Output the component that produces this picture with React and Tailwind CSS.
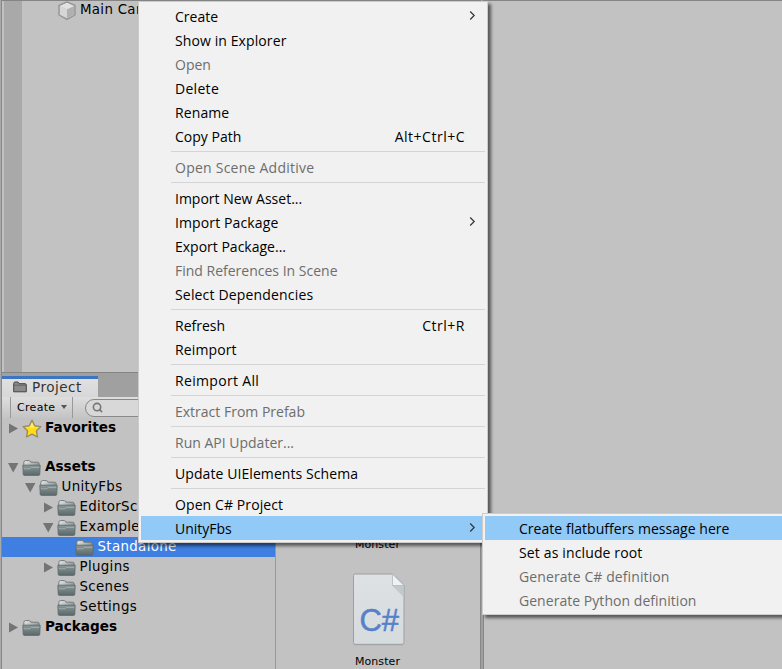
import React from 'react';
import { Search } from 'lucide-react';
import clsx from 'clsx';

const assetMenu = [
  { label: 'Create', submenu: true },
  { label: 'Show in Explorer', tracking: 'tracking-[0.1px]' },
  { label: 'Open', disabled: true },
  { label: 'Delete', tracking: 'tracking-[0.3px]' },
  { label: 'Rename', tracking: 'tracking-[0.1px]' },
  { label: 'Copy Path', shortcut: 'Alt+Ctrl+C' },
  { separator: true },
  { label: 'Open Scene Additive', disabled: true, tracking: 'tracking-[0.24px]' },
  { separator: true },
  { label: 'Import New Asset...' },
  { label: 'Import Package', submenu: true, tracking: 'tracking-[0.12px]' },
  { label: 'Export Package...' },
  { label: 'Find References In Scene', disabled: true },
  { label: 'Select Dependencies', tracking: 'tracking-[0.17px]' },
  { separator: true },
  { label: 'Refresh', shortcut: 'Ctrl+R' },
  { label: 'Reimport', tracking: 'tracking-[0.12px]' },
  { separator: true },
  { label: 'Reimport All', tracking: 'tracking-[0.32px]' },
  { separator: true },
  { label: 'Extract From Prefab', disabled: true },
  { separator: true },
  { label: 'Run API Updater...', disabled: true },
  { separator: true },
  { label: 'Update UIElements Schema', tracking: 'tracking-[0.08px]' },
  { separator: true },
  { label: 'Open C# Project', tracking: 'tracking-[0.1px]' },
  { label: 'UnityFbs', submenu: true, active: true },
];

const fbsMenu = [
  { label: 'Create flatbuffers message here', active: true, tracking: 'tracking-[0.04px]' },
  { label: 'Set as include root', tracking: 'tracking-[0.14px]' },
  { label: 'Generate C# definition', disabled: true, tracking: 'tracking-[0.1px]' },
  { label: 'Generate Python definition', disabled: true, tracking: 'tracking-[0.04px]' },
];

const FolderIcon = () => (
  <svg className="h-[18px] w-[19px] shrink-0" viewBox="0 0 19 18">
    <defs>
      <linearGradient id="folderFront" x1="0" y1="0" x2="0" y2="1">
        <stop offset="0" stopColor="#8b9899" />
        <stop offset="1" stopColor="#5b6869" />
      </linearGradient>
      <linearGradient id="folderBack" x1="0" y1="0" x2="1" y2="0.6">
        <stop offset="0" stopColor="#f2f2f2" />
        <stop offset="1" stopColor="#8d9797" />
      </linearGradient>
    </defs>
    <path d="M1.8 7V3.5Q1.8 1.6 3.8 1.6H7.3Q8.6 1.6 8.9 3.2H15.4Q17.2 3.2 17.2 5V7Z" fill="url(#folderBack)" stroke="#747b7b" />
    <path d="M0.8 6.2H18.2L17.8 15.2Q17.7 16.4 16.5 16.4H2.5Q1.3 16.4 1.2 15.2Z" fill="url(#folderFront)" stroke="#5f696a" strokeWidth="0.8" />
    <path d="M1.8 9.8H8L9.2 8.4H17.2" fill="none" stroke="#a5b0b1" strokeWidth="0.9" />
  </svg>
);

const StarIcon = () => (
  <svg className="h-5 w-5 shrink-0" viewBox="0 0 20 20">
    <path
      d="M10 1.2L12.7 6.7L18.8 7.6L14.4 11.9L15.5 18L10 15.1L4.5 18L5.6 11.9L1.2 7.6L7.3 6.7Z"
      fill="#ffdc16"
      stroke="#958b6a"
      strokeWidth="1.4"
      strokeLinejoin="round"
    />
    <path d="M10 3.4L11.8 7.8L16 8.5H4L8.2 7.8Z" fill="#ffed75" />
  </svg>
);

const CubeIcon = () => (
  <svg className="h-[19px] w-[18px] shrink-0" viewBox="0 0 18 19">
    <path d="M9 1L17 4.5V14L9 18.3L1 14V4.5Z" fill="#c9c9c9" stroke="#959595" strokeWidth="1.4" strokeLinejoin="round" />
    <path d="M9 1.8L16 5L9 8.3L2 5Z" fill="#e2e2e2" />
    <path d="M2 5.2L9 8.4V17L2 13.4Z" fill="#d6d6d6" />
    <path d="M16 5.2L9 8.4V17L16 13.4Z" fill="#b0b0b0" />
  </svg>
);

const Arrow = ({ open }) => (
  <svg className="h-[11px] w-[11px] shrink-0" viewBox="0 0 11 11">
    <path d={open ? 'M0 1H10.4L5.2 10.5Z' : 'M1 0.5L10 5.5L1 10.5Z'} fill="#747474" />
  </svg>
);

const ScriptIcon = () => (
  <svg className="h-[73px] w-[53px]" viewBox="0 0 53 73">
    <defs>
      <linearGradient id="paper" x1="0" y1="0" x2="0" y2="1">
        <stop offset="0" stopColor="#dde1e3" />
        <stop offset="1" stopColor="#d6dbdd" />
      </linearGradient>
    </defs>
    <path d="M2 3H51V72.5H2Z" fill="#a9a9a9" opacity="0.5" />
    <path d="M3 1H40.5L52 12.5V69.5Q52 71.3 50 71.3H3Q1.5 71.3 1.5 69.5V2.5Q1.5 1 3 1Z" fill="url(#paper)" stroke="#9b9fa1" />
    <path d="M40 12.5H51.5V24Z" fill="#c3c8ca" />
    <path d="M40.5 1L52 12.5H40.5Z" fill="#eff2f3" stroke="#b4b9bb" strokeWidth="0.8" />
    <path d="M41 0H53V12Z" fill="#c2c2c2" />
    <text x="7.6" y="58" fontFamily="Liberation Sans" fontSize="31" fill="#5680ca" stroke="#5680ca" strokeWidth="0.5" textLength="39.5">C#</text>
  </svg>
);

// One line of the project tree
const TreeRow = ({ label, indent, arrow, icon = <FolderIcon />, bold, selected }) => (
  <div className={clsx('flex h-5 items-center', indent, selected ? 'bg-[#3e7fe1] text-white' : 'text-black')}>
    <div className="w-[14px] shrink-0">{arrow && <Arrow open={arrow === 'open'} />}</div>
    <div className="flex w-[19px] shrink-0 justify-center pt-px">{icon}</div>
    <span className={clsx('leading-4 whitespace-nowrap', bold ? 'ml-1 pb-[3px] text-[13.6px] font-bold' : 'ml-[3.5px] pb-px text-[13.4px] tracking-[0.33px]')}>{label}</span>
  </div>
);

const MenuItem = ({ label, shortcut, submenu, disabled, active, tracking }) => (
  <div className={clsx('flex h-6 items-center pl-[34px]', active && 'bg-[#91c9f7]', disabled ? 'text-[#6d6d6d]' : 'text-black')}>
    <span className={clsx('pt-0.5 text-[14px] leading-[22px] whitespace-nowrap', tracking)}>{label}</span>
    {shortcut && <span className="mr-5 ml-auto pt-0.5 text-[14px] leading-[22px] tracking-[0.5px]">{shortcut}</span>}
    {submenu && (
      <svg className="mr-[9px] mb-px ml-auto h-[9px] w-[7px]" viewBox="0 0 7 9">
        <path d="M1.2 0.5L5.2 4.5L1.2 8.5" fill="none" stroke="#333" strokeWidth="1.2" />
      </svg>
    )}
  </div>
);

const ContextMenu = ({ items, className }) => (
  <div className={clsx("absolute border border-[#cccccc] bg-[#f1f1f1] p-0.5 font-['Open_Sans',sans-serif] shadow-[3px_3px_3px_rgba(0,0,0,0.55)]", className)}>
    {items.map((item, index) =>
      item.separator ? (
        <div key={index} className="flex h-[7px] items-center pl-[30px]">
          <div className="h-px w-full bg-[#d4d4d4]" />
        </div>
      ) : (
        <MenuItem key={item.label} {...item} />
      )
    )}
  </div>
);

const HierarchyPanel = () => (
  <div className="flex h-[373px] border-t border-b border-[#858585] pl-0.5">
    <div className="w-[18px] bg-[#a9a9a9]" />
    <div className="flex h-[19px] items-center pl-9">
      <CubeIcon />
      <span className="ml-1 pb-0.5 text-[13.4px] leading-4 tracking-[0.3px] whitespace-nowrap">Main Camera</span>
    </div>
  </div>
);

const ProjectTree = () => (
  <div className="w-[274px] shrink-0 border-r border-[#999999]">
    <TreeRow label="Favorites" indent="pl-1.5" arrow="closed" icon={<StarIcon />} bold />
    <div className="h-[19px]" />
    <TreeRow label="Assets" indent="pl-1.5" arrow="open" bold />
    <TreeRow label="UnityFbs" indent="pl-[23px]" arrow="open" />
    <TreeRow label="EditorScripts" indent="pl-[41px]" arrow="closed" />
    <TreeRow label="Example" indent="pl-[41px]" arrow="open" />
    <TreeRow label="Standalone" indent="pl-[59px]" selected />
    <TreeRow label="Plugins" indent="pl-[41px]" arrow="closed" />
    <TreeRow label="Scenes" indent="pl-[41px]" />
    <TreeRow label="Settings" indent="pl-[41px]" />
    <TreeRow label="Packages" indent="pl-1.5" arrow="closed" bold />
  </div>
);

const ProjectPanel = () => (
  <div className="flex flex-1 flex-col">
    <div className="flex h-6 items-end bg-[#a0a0a0] pt-[3px]">
      <div className="flex h-[21px] w-24 items-center border-t-[3px] border-[#3c76c3] bg-gradient-to-b from-[#e0e0e0] to-[#d7d7d7] pl-[11px]">
        <svg className="mb-0.5 h-3 w-[14px]" viewBox="0 0 14 12">
          <path d="M0.7 10.8V2.5Q0.7 1 2.2 1H5L6 2.7H12Q13.3 2.7 13.3 4V10.8Z" fill="#8b8b8b" stroke="#444" />
          <path d="M1 4.2H13" stroke="#555" strokeWidth="0.7" />
        </svg>
        <span className="ml-[5px] pb-0.5 text-[13.6px] leading-4 tracking-[0.45px] text-[#333]">Project</span>
      </div>
    </div>
    <div className="flex h-[21px] items-center bg-gradient-to-b from-[#dedede] to-[#c4c4c4] pl-2">
      <div className="flex h-[21px] w-[63px] items-center border-x border-[#999] pt-0.5 pl-1.5 text-[11px] tracking-[0.3px]">
        Create
        <svg className="mb-1 ml-1.5 h-1 w-[6px]" viewBox="0 0 6 4">
          <path d="M0 0H6L3 4Z" fill="#555" />
        </svg>
      </div>
      <div className="ml-3 flex h-[18px] w-[180px] items-center rounded-full border border-[#888] bg-[#d8d8d8] pb-px pl-1.5">
        <Search className="h-[11px] w-[11px] text-[#757575]" strokeWidth={3.5} />
      </div>
    </div>
    <div className="flex flex-1">
      <ProjectTree />
      <div className="flex w-[203px] flex-col items-center pt-[120px]">
        <span className="text-[11px] leading-[14px] tracking-[0.1px]">Monster</span>
        <div className="mt-[21px] ml-0.5">
          <ScriptIcon />
        </div>
        <span className="mt-[9px] text-[11px] leading-[14px] tracking-[0.1px]">Monster</span>
      </div>
    </div>
  </div>
);

export default function App() {
  return (
    <div className="relative flex h-[669px] w-[782px] overflow-hidden bg-[#c2c2c2] font-['DejaVu_Sans',sans-serif] text-black">
      <div className="w-0.5 shrink-0 border-r border-[#878787] bg-[#aaaaaa]" />
      <div className="flex w-[478px] shrink-0 flex-col">
        <HierarchyPanel />
        <ProjectPanel />
      </div>
      <div className="w-1 shrink-0 border-x border-[#878787] bg-[#a0a0a0]" />
      <div className="flex-1 border-t border-[#858585]" />

      <ContextMenu items={assetMenu} className="top-px left-[138px] w-[350px]" />
      <ContextMenu items={fbsMenu} className="top-[513px] left-[482px] w-[320px]" />
    </div>
  );
}
